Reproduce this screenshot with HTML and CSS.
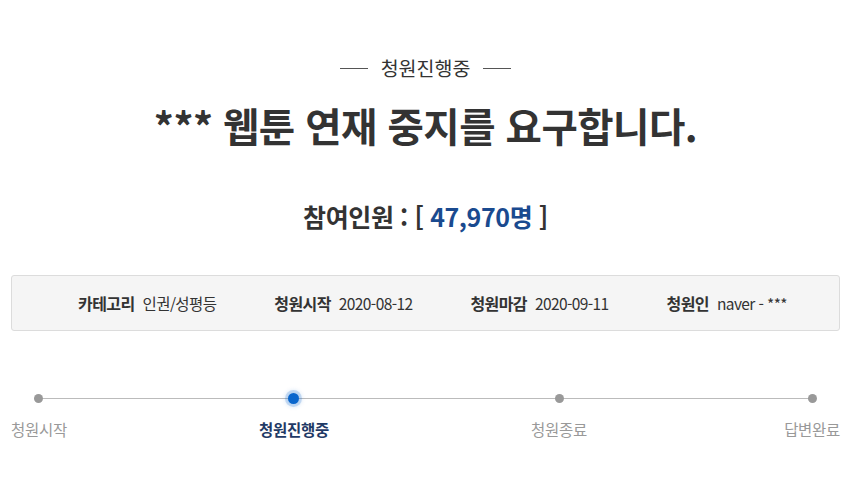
FILE: index.html
```html
<!DOCTYPE html>
<html lang="ko">
<head>
<meta charset="utf-8">
<link rel="stylesheet" href="styles.css">
</head>
<body>
<div class="page">
  <div class="status"><span class="rule"></span><span class="status-text">청원진행중</span><span class="rule"></span></div>
  <h1 class="title">*** 웹툰 연재 중지를 요구합니다.</h1>
  <div class="count">참여인원 : [ <span class="num">47,970명</span> ]</div>
  <div class="meta">
    <div class="item"><b>카테고리</b><span>인권/성평등</span></div>
    <div class="item"><b>청원시작</b><span>2020-08-12</span></div>
    <div class="item"><b>청원마감</b><span>2020-09-11</span></div>
    <div class="item"><b>청원인</b><span>naver - ***</span></div>
  </div>
  <div class="progress">
    <div class="track"></div>
    <div class="step"><span class="dot"></span><span class="label">청원시작</span></div>
    <div class="step active"><span class="dot"></span><span class="label">청원진행중</span></div>
    <div class="step"><span class="dot"></span><span class="label">청원종료</span></div>
    <div class="step"><span class="dot"></span><span class="label">답변완료</span></div>
  </div>
</div>
</body>
</html>
```

FILE: styles.css
```css
* { box-sizing: border-box; }
body {
  margin: 0;
  background: #fff;
  font-family: "Noto Sans CJK KR", "Noto Sans", sans-serif;
  color: #333;
}
.page {
  padding: 54px 11px 0;
}
.status {
  display: flex;
  justify-content: center;
  align-items: center;
  gap: 13px;
  height: 28px;
}
.rule {
  width: 28px;
  height: 1px;
  background: #555;
}
.status-text {
  font-size: 19.5px;
  color: #333;
  line-height: 28px;
}
.title {
  margin: 15px 0 0;
  text-align: center;
  font-size: 39.5px;
  font-weight: 700;
  line-height: 56px;
  letter-spacing: -0.5px;
  color: #333;
}
.count {
  margin-top: 46px;
  text-align: center;
  font-size: 25px;
  font-weight: 700;
  line-height: 34px;
  color: #333;
  letter-spacing: -0.4px;
}
.num { color: #1a4a8f; }
.meta {
  margin-top: 42px;
  height: 56px;
  background: #f5f5f5;
  border: 1px solid #dcdcdc;
  border-radius: 3px;
  display: flex;
  justify-content: center;
  align-items: center;
  gap: 58px;
  padding-left: 14px;
  font-size: 15.5px;
}
.item {
  display: flex;
  gap: 8px;
  align-items: baseline;
  letter-spacing: -0.6px;
}
.item b { font-weight: 700; color: #333; font-size: 16px; }
.item span { color: #333; }
.progress {
  position: relative;
  margin-top: 52px;
  display: flex;
  justify-content: space-between;
}
.track {
  position: absolute;
  left: 26px;
  right: 27px;
  top: 15px;
  height: 1px;
  background: #bbb;
}
.step {
  position: relative;
  display: flex;
  flex-direction: column;
  align-items: center;
}
.dot {
  width: 9px;
  height: 9px;
  border-radius: 50%;
  background: #999;
  margin-top: 11px;
}
.step.active { left: -5px; }
.step.active .dot {
  width: 11px;
  height: 11px;
  margin-top: 10px;
  background: #0a66cc;
  box-shadow: 0 0 0 3px rgba(10, 102, 204, 0.18), 0 0 4px 3px rgba(10, 102, 204, 0.15);
}
.step.active .label { color: #1f3a66; font-weight: 700; }
.label {
  margin-top: 15px;
  font-size: 15.5px;
  line-height: 22px;
  color: #999;
  letter-spacing: -0.3px;
}
.step.active .label { margin-top: 14px; }
```
